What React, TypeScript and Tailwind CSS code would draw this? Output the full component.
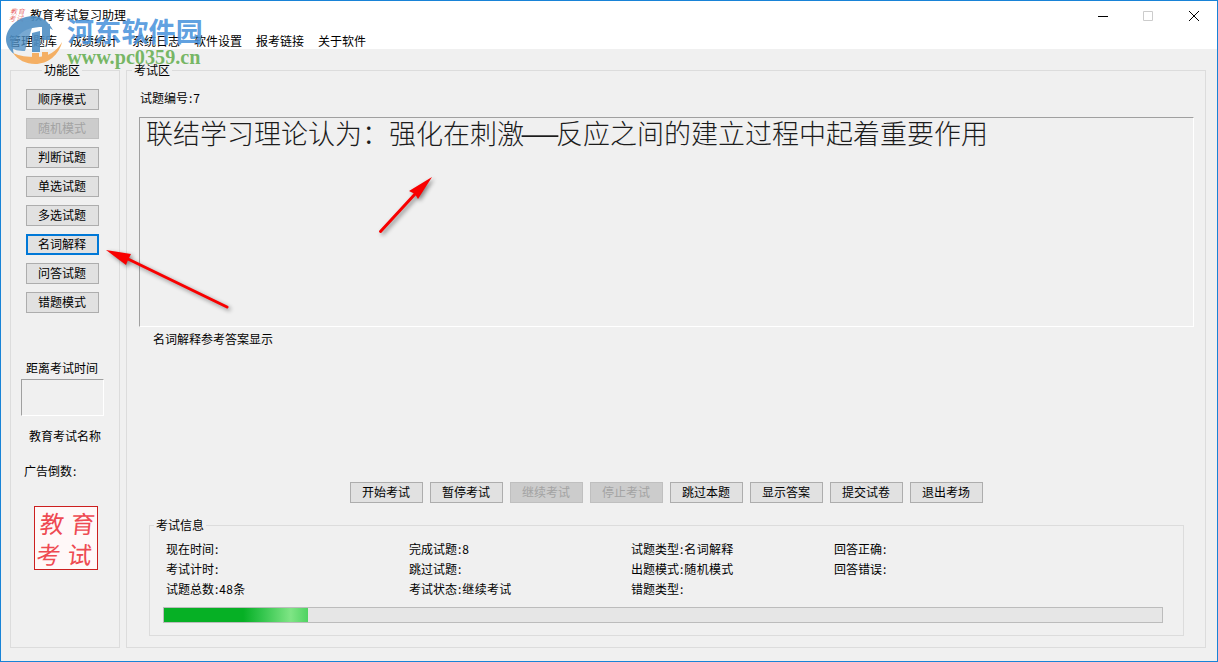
const MENUS = ["管理题库", "成绩统计", "系统日志", "软件设置", "报考链接", "关于软件"];

const MODES = [
  { label: "顺序模式" },
  { label: "随机模式", disabled: true },
  { label: "判断试题" },
  { label: "单选试题" },
  { label: "多选试题" },
  { label: "名词解释", focused: true },
  { label: "问答试题" },
  { label: "错题模式" },
];

const ACTIONS = [
  { label: "开始考试" },
  { label: "暂停考试" },
  { label: "继续考试", disabled: true },
  { label: "停止考试", disabled: true },
  { label: "跳过本题" },
  { label: "显示答案" },
  { label: "提交试卷" },
  { label: "退出考场" },
];

const INFO = [
  { width: "w-[243px]", rows: ["现在时间:", "考试计时:", "试题总数:48条"] },
  { width: "w-[222px]", rows: ["完成试题:8", "跳过试题:", "考试状态:继续考试"] },
  { width: "w-[203px]", rows: ["试题类型:名词解释", "出题模式:随机模式", "错题类型:"] },
  { width: "w-[120px]", rows: ["回答正确:", "回答错误:", ""] },
];

function WinButton({ label, disabled, focused }: { label: string; disabled?: boolean; focused?: boolean }) {
  const tone = disabled
    ? "border border-[#bfbfbf] bg-[#cccccc] text-[#a3a3a3]"
    : focused
      ? "border-2 border-[#0078d7] bg-[#e1e1e1] text-black"
      : "border border-[#adadad] bg-[#e1e1e1] text-black";
  return (
    <button className={`flex h-[21px] w-[73px] shrink-0 items-center justify-center pb-[2px] pr-[1px] text-xs leading-none ${tone}`}>
      {label}
    </button>
  );
}

// label:value text, the colon sits wider than in the CJK font
function Field({ text }: { text: string }) {
  if (!text.includes(":")) return <>{text}</>;
  const [label, value] = text.split(":");
  return (
    <>
      {label}
      <span className="mx-[1px]">:</span>
      <span className="tracking-[0.3px]">{value}</span>
    </>
  );
}

function Stamp({ small }: { small?: boolean }) {
  if (small) {
    return (
      <div className="grid h-[14px] w-[15px] -skew-x-12 grid-cols-2 text-[7px] font-light leading-[7px] text-[#e2302f]">
        <span>教</span>
        <span>育</span>
        <span>考</span>
        <span>试</span>
      </div>
    );
  }
  return (
    <div className="h-[64px] w-[64px] border border-[#cc1f1f] bg-[#fff8f8]">
      <div className="grid h-full w-full -skew-x-6 grid-cols-2 grid-rows-2 place-items-center text-[24px] font-normal leading-[28px] text-[#ee4a52]">
        <span>教</span>
        <span>育</span>
        <span>考</span>
        <span>试</span>
      </div>
    </div>
  );
}

function WindowButtons() {
  return (
    <div className="absolute right-0 top-0 flex h-[30px] items-center">
      <svg width="46" height="30" viewBox="0 0 46 30">
        <path d="M13 15.5h10" stroke="#000" strokeWidth="1" />
      </svg>
      <svg width="46" height="30" viewBox="0 0 46 30">
        <path d="M12.5 10.5h9v9h-9z" fill="none" stroke="#cccccc" strokeWidth="1" />
      </svg>
      <svg width="46" height="30" viewBox="0 0 46 30" className="mr-[-6px]">
        <path d="M12 10l10 10M22 10l-10 10" stroke="#000" strokeWidth="1" />
      </svg>
    </div>
  );
}

function Watermark() {
  return (
    <div className="pointer-events-none absolute left-[4px] top-[14px] flex gap-[4px]">
      <svg width="58" height="50" viewBox="0 0 58 50" className="opacity-90">
        <path d="M29 1C14 1 2 11 1 24c0 6 3 11 8 15-2-6-1-13 5-19 6-6 14-8 24-8 4 0 7 1 10 3C43 6 36 1 29 1z" fill="#4f8fc4" />
        <path d="M3 20c4-8 14-14 26-14l-9 30c-6 0-12-1-14-4z" fill="#4f8fc4" opacity="0.85" />
        <path d="M27 18l8-2v21h-8zM37 10l8-1v16h-8z" fill="#4f8fc4" />
        <path d="M8 38c5 7 13 11 22 11 13 0 24-9 27-22-5 9-14 15-26 15-9 0-16-1-23-4z" fill="#f5a955" />
        <path d="M27 38h7v10h-7zM37 37h6v8h-6z" fill="#f5a955" />
      </svg>
      <div className="flex flex-col">
        <span className="text-[27px] font-bold leading-[31px] tracking-[0.2px] text-[#4b94dc]/90">河东软件园</span>
        <span className="mt-[1px] font-['Liberation_Serif',serif] text-[20.2px] font-bold leading-[20px] text-[#6fb35c]/95">
          www.pc0359.cn
        </span>
      </div>
    </div>
  );
}

function Arrows() {
  return (
    <svg
      width="1218"
      height="662"
      viewBox="0 0 1218 662"
      className="pointer-events-none absolute left-0 top-0 drop-shadow-[2px_2px_2px_rgba(0,0,0,0.45)]"
    >
      <path d="M379.5 230.5L415 192" stroke="#f80000" strokeWidth="3" strokeLinecap="round" />
      <path d="M431 176L408 190L414 193L417 198z" fill="#f80000" />
      <path d="M226 306L127 258" stroke="#f80000" strokeWidth="3" strokeLinecap="round" />
      <path d="M105 249L130 253L127 259L125 264z" fill="#f80000" />
    </svg>
  );
}

export default function App() {
  return (
    <div className="relative flex h-[662px] w-[1218px] flex-col overflow-hidden border border-[#1883d7] bg-[#f0f0f0] font-['Noto_Sans_CJK_SC','Noto_Sans',sans-serif] text-xs text-black">
      <header className="relative h-[48px] shrink-0 bg-white">
        <div className="flex items-center gap-[5px] pl-[9px] pt-[6px]">
          <Stamp small />
          <span className="leading-[16px]">教育考试复习助理</span>
        </div>
        <nav className="flex gap-[14px] pl-[8px] pt-[10px] leading-[16px]">
          {MENUS.map((menu, i) => (
            <span key={menu} className={i === 0 ? "mr-[-1px]" : ""}>
              {menu}
            </span>
          ))}
        </nav>
        <WindowButtons />
      </header>

      <main className="flex min-h-0 flex-1 gap-[6px] pb-[13px] pl-[9px] pr-[11px] pt-[21px]">
        <aside className="relative flex w-[110px] shrink-0 flex-col border border-[#dcdcdc] pl-[15px] pt-[18px]">
          <span className="absolute left-[31px] top-[-9px] bg-[#f0f0f0] px-[2px] leading-[16px]">功能区</span>
          <div className="flex flex-col gap-[8px]">
            {MODES.map((mode) => (
              <WinButton key={mode.label} {...mode} />
            ))}
          </div>
          <span className="mt-[47px] leading-[16px]">距离考试时间</span>
          <div className="ml-[-5px] mt-[3px] h-[37px] w-[83px] border border-b-white border-l-[#a0a0a0] border-r-white border-t-[#a0a0a0]" />
          <span className="ml-[3px] mt-[12px] leading-[16px]">教育考试名称</span>
          <span className="ml-[-2px] mt-[19px] leading-[16px]">
            <Field text="广告倒数:" />
          </span>
          <div className="ml-[8px] mt-[27px]">
            <Stamp />
          </div>
        </aside>

        <section className="relative flex min-w-0 flex-1 flex-col border border-[#dcdcdc] pl-[12px] pr-[11px] pt-[19px]">
          <span className="absolute left-[5px] top-[-9px] bg-[#f0f0f0] px-[2px] leading-[16px]">考试区</span>
          <div className="ml-[1px] leading-[16px]">
            <Field text="试题编号:7" />
          </div>
          <div className="mt-[11px] h-[210px] border border-b-white border-l-[#a0a0a0] border-r-white border-t-[#a0a0a0] pl-[6px] text-[27px] font-light leading-[30px] text-[#1c1c1c]">
            联结学习理论认为：强化在刺激
            <span className="inline-block w-[32px] scale-x-[1.7] text-center font-normal">—</span>
            反应之间的建立过程中起着重要作用
          </div>
          <div className="ml-[14px] mt-[4px] leading-[16px]">名词解释参考答案显示</div>

          <div className="ml-[211px] mt-[135px] flex gap-[7px]">
            {ACTIONS.map((action) => (
              <WinButton key={action.label} {...action} />
            ))}
          </div>

          <div className="relative ml-[10px] mr-[10px] mt-[22px] flex h-[111px] flex-col border border-[#dcdcdc] pl-[13px] pr-[20px] pt-[15px]">
            <span className="absolute left-[4px] top-[-9px] bg-[#f0f0f0] px-[2px] leading-[16px]">考试信息</span>
            <div className="flex pl-[3px]">
              {INFO.map((col) => (
                <div key={col.rows[0]} className={`flex flex-col gap-[4px] ${col.width}`}>
                  {col.rows.map((row, i) => (
                    <span key={i} className="h-[16px] leading-[16px]">
                      <Field text={row} />
                    </span>
                  ))}
                </div>
              ))}
            </div>
            <div className="mt-[10px] h-[16px] border border-[#bcbcbc] bg-[#e6e6e6]">
              <div className="h-full w-[144px] bg-[linear-gradient(90deg,#06b025_0%,#06b025_55%,#32c54c_68%,#7fe585_88%,#4fd362_100%)]" />
            </div>
          </div>
        </section>
      </main>

      <Watermark />
      <Arrows />
    </div>
  );
}
